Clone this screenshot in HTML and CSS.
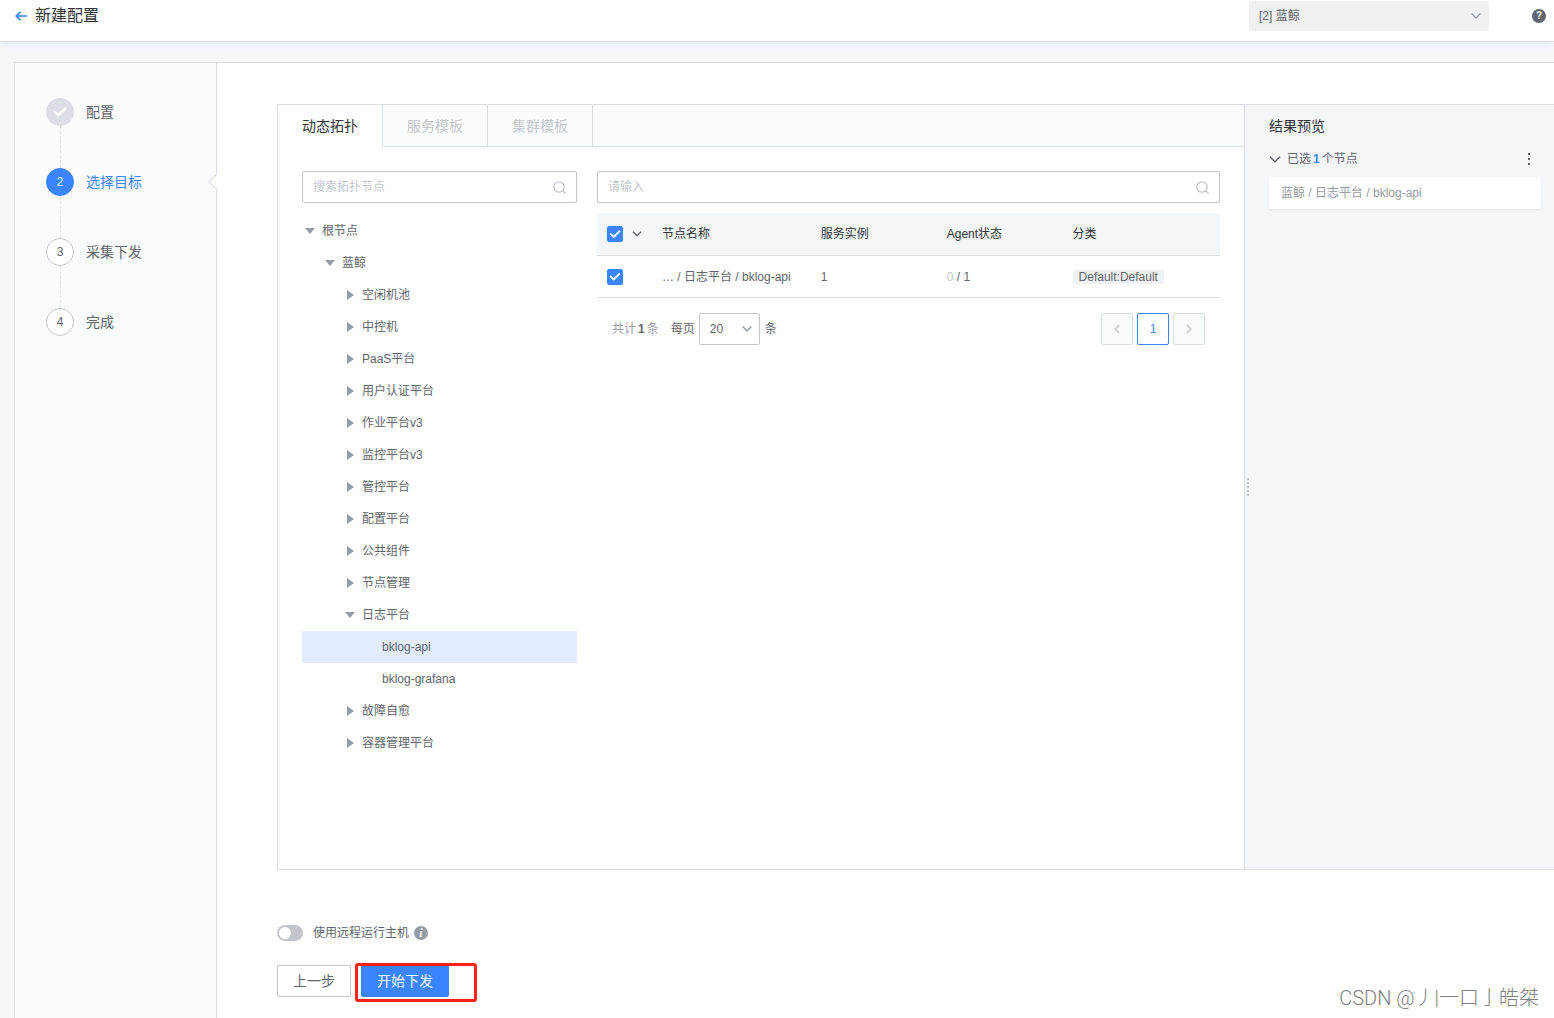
FILE: index.html
```html
<!DOCTYPE html>
<html lang="zh-CN">
<head>
<meta charset="utf-8">
<meta name="viewport" content="width=device-width, initial-scale=1">
<title>新建配置</title>
<link rel="stylesheet" href="styles.css">
</head>
<body>
<header class="topbar">
  <a class="back" href="#" aria-label="返回">
    <svg width="14" height="12" viewBox="0 0 14 12"><path d="M6.5 1.8 2.2 6 6.5 10.2M2.2 6H13" fill="none" stroke="currentColor" stroke-width="1.7"/></svg>
  </a>
  <h1 class="page-title">新建配置</h1>
  <div class="select biz-select">
    <select aria-label="业务"><option>[2] 蓝鲸</option></select>
    <svg class="chevron" width="10" height="6" viewBox="0 0 10 6"><path d="M.6.6 5 5 9.4.6" fill="none" stroke="currentColor" stroke-width="1.4"/></svg>
  </div>
  <button class="help" type="button" aria-label="帮助">?</button>
</header>

<div class="workspace">
  <nav class="sidebar" aria-label="步骤">
    <ol class="steps">
      <li class="step done">
        <span class="step-mark"><svg width="14" height="10" viewBox="0 0 14 10"><path d="M1 4.2 5.2 8.2 13 1" fill="none" stroke="currentColor" stroke-width="2.4"/></svg></span>
        <span>配置</span>
      </li>
      <li class="step current" aria-current="step"><span class="step-mark">2</span><span>选择目标</span></li>
      <li class="step"><span class="step-mark">3</span><span>采集下发</span></li>
      <li class="step"><span class="step-mark">4</span><span>完成</span></li>
    </ol>
  </nav>

  <main class="content">
    <section class="selector">
      <div class="picker">
        <div class="tabs" role="tablist">
          <button class="tab active" type="button" role="tab" aria-selected="true">动态拓扑</button>
          <button class="tab" type="button" role="tab" aria-selected="false" disabled>服务模板</button>
          <button class="tab" type="button" role="tab" aria-selected="false" disabled>集群模板</button>
        </div>
        <div class="picker-body">
          <div class="topology">
            <label class="search">
              <input type="text" placeholder="搜索拓扑节点" aria-label="搜索拓扑节点">
              <svg width="13" height="13" viewBox="0 0 13 13"><circle cx="6" cy="6" r="5.2"/><path d="m9.6 9.6 3 3"/></svg>
            </label>
            <ul class="tree">
              <li><button type="button" class="node level-0 open">根节点</button></li>
              <li><button type="button" class="node level-1 open">蓝鲸</button></li>
              <li><button type="button" class="node level-2">空闲机池</button></li>
              <li><button type="button" class="node level-2">中控机</button></li>
              <li><button type="button" class="node level-2">PaaS平台</button></li>
              <li><button type="button" class="node level-2">用户认证平台</button></li>
              <li><button type="button" class="node level-2">作业平台v3</button></li>
              <li><button type="button" class="node level-2">监控平台v3</button></li>
              <li><button type="button" class="node level-2">管控平台</button></li>
              <li><button type="button" class="node level-2">配置平台</button></li>
              <li><button type="button" class="node level-2">公共组件</button></li>
              <li><button type="button" class="node level-2">节点管理</button></li>
              <li><button type="button" class="node level-2 open">日志平台</button></li>
              <li><button type="button" class="node level-3 leaf selected">bklog-api</button></li>
              <li><button type="button" class="node level-3 leaf">bklog-grafana</button></li>
              <li><button type="button" class="node level-2">故障自愈</button></li>
              <li><button type="button" class="node level-2">容器管理平台</button></li>
            </ul>
          </div>

          <div class="nodes">
            <label class="search">
              <input type="text" placeholder="请输入" aria-label="请输入">
              <svg width="13" height="13" viewBox="0 0 13 13"><circle cx="6" cy="6" r="5.2"/><path d="m9.6 9.6 3 3"/></svg>
            </label>
            <table class="node-table">
              <thead>
                <tr>
                  <th class="col-check"><span class="check-cell"><input type="checkbox" class="check" checked aria-label="全选"><svg class="chevron" width="10" height="6" viewBox="0 0 10 6"><path d="M1 .8 5 4.8 9 .8" fill="none" stroke="currentColor" stroke-width="1.4"/></svg></span></th>
                  <th class="col-name">节点名称</th>
                  <th class="col-count">服务实例</th>
                  <th class="col-agent">Agent状态</th>
                  <th>分类</th>
                </tr>
              </thead>
              <tbody>
                <tr>
                  <td class="col-check"><span class="check-cell"><input type="checkbox" class="check" checked aria-label="bklog-api"></span></td>
                  <td>… / 日志平台 / bklog-api</td>
                  <td>1</td>
                  <td><span class="zero">0</span> / 1</td>
                  <td><span class="tag">Default:Default</span></td>
                </tr>
              </tbody>
            </table>
            <div class="pagination">
              <span class="total">共计<b>1</b>条</span>
              <label for="page-size">每页</label>
              <div class="select size-select">
                <select id="page-size"><option>20</option></select>
                <svg class="chevron" width="10" height="6" viewBox="0 0 10 6"><path d="M.6.6 5 5 9.4.6" fill="none" stroke="currentColor" stroke-width="1.4"/></svg>
              </div>
              <span>条</span>
              <div class="pages">
                <button type="button" class="page" disabled aria-label="上一页"><svg width="6" height="10" viewBox="0 0 6 10"><path d="M5.2 1 1.2 5l4 4" fill="none" stroke="currentColor" stroke-width="1.6"/></svg></button>
                <button type="button" class="page active">1</button>
                <button type="button" class="page" disabled aria-label="下一页"><svg width="6" height="10" viewBox="0 0 6 10"><path d="m.8 1 4 4-4 4" fill="none" stroke="currentColor" stroke-width="1.6"/></svg></button>
              </div>
            </div>
          </div>
        </div>
      </div>

      <aside class="preview">
        <span class="resizer"></span>
        <h2 class="preview-title">结果预览</h2>
        <div class="preview-group">
          <svg class="chevron" width="12" height="7" viewBox="0 0 12 7"><path d="M1 .8 6 5.8 11 .8" fill="none" stroke="currentColor" stroke-width="1.5"/></svg>
          <span class="picked">已选<b>1</b>个节点</span>
          <button class="more" type="button" aria-label="更多"><svg width="2" height="12" viewBox="0 0 2 12"><path d="M0 0h2v2H0zM0 5h2v2H0zM0 10h2v2H0z" fill="currentColor"/></svg></button>
        </div>
        <div class="preview-item">蓝鲸 / 日志平台 / bklog-api</div>
      </aside>
    </section>

    <div class="remote">
      <input id="remote-host" class="switch" type="checkbox" role="switch">
      <label for="remote-host">使用远程运行主机</label>
      <span class="info">i</span>
    </div>

    <div class="actions">
      <button class="btn" type="button">上一步</button>
      <div class="submit">
        <button class="btn primary" type="button">开始下发</button>
        <span class="highlight"></span>
      </div>
    </div>
  </main>
</div>
<div class="watermark">CSDN @丿|一口亅皓桀</div>
</body>
</html>
```

FILE: styles.css
```css
:root {
  --blue: #3a84ff;
  --text: #63656e;
  --dark: #313238;
  --muted: #979ba5;
  --faint: #c4c6cc;
  --line: #dcdee5;
  --panel: #f4f6fa;
}

* {
  box-sizing: border-box;
}

body {
  position: relative;
  display: flex;
  flex-direction: column;
  min-height: 100vh;
  margin: 0;
  background: #f5f7fb;
  color: var(--text);
  font: 12px/20px "Liberation Sans", "Noto Sans CJK SC", sans-serif;
}

button,
input,
select {
  margin: 0;
  color: inherit;
  font: inherit;
}

button {
  padding: 0;
  border: 0;
  background: none;
}

ul,
ol {
  margin: 0;
  padding: 0;
  list-style: none;
}

svg {
  display: block;
  flex: none;
}

/* Top bar */
.topbar {
  display: flex;
  align-items: center;
  padding: 1px 8px 10px 14px;
  border-bottom: 1px solid var(--line);
  background: #fff;
  box-shadow: 0 3px 6px #e6ebf5;
}

.back {
  color: var(--blue);
}

.page-title {
  margin: 0 auto 0 7px;
  color: var(--dark);
  font-size: 16px;
  font-weight: 400;
  line-height: 24px;
}

.select {
  display: grid;
  align-items: center;
}

.select select {
  grid-area: 1 / 1;
  width: 100%;
  border: 0;
  border-radius: 2px;
  outline: 0;
  appearance: none;
}

.select .chevron {
  grid-area: 1 / 1;
  justify-self: end;
  margin-right: 8px;
  color: var(--muted);
  pointer-events: none;
}

.biz-select {
  width: 240px;
  margin-right: 43px;
}

.biz-select select {
  height: 30px;
  padding: 0 10px;
  background: #f0f1f5;
}

.help,
.info {
  display: grid;
  place-items: center;
  width: 14px;
  height: 14px;
  border-radius: 50%;
  background: var(--text);
  color: #fff;
  font-size: 10px;
  font-weight: 700;
  line-height: 14px;
}

/* Frame */
.workspace {
  display: flex;
  flex: 1;
  margin: 20px 0 0 14px;
  border: solid var(--line);
  border-width: 1px 0 0 1px;
}

.sidebar {
  flex: none;
  width: 202px;
  padding: 35px 0 0 31px;
  border-right: 1px solid var(--line);
  background: #fafbfd;
}

.step {
  position: relative;
  display: flex;
  align-items: center;
  gap: 12px;
  height: 28px;
  margin-bottom: 42px;
  font-size: 14px;
}

.step:not(:last-child)::before {
  position: absolute;
  top: 28px;
  left: 14px;
  height: 42px;
  border-left: 1px dashed var(--line);
  content: "";
}

.step-mark {
  display: grid;
  place-items: center;
  width: 28px;
  height: 28px;
  border: 1px solid var(--faint);
  border-radius: 50%;
  background: #fff;
  font-size: 12px;
}

.done .step-mark {
  border-color: var(--line);
  background: var(--line);
  color: #fff;
}

.current {
  color: var(--blue);
}

.current .step-mark {
  border-color: var(--blue);
  background: var(--blue);
  color: #fff;
}

.current::after {
  position: absolute;
  top: 8px;
  right: -7px;
  width: 11px;
  height: 11px;
  border: solid var(--line);
  border-width: 0 0 1px 1px;
  background: #fff;
  transform: rotate(45deg);
  content: "";
}

.content {
  flex: 1;
  min-width: 0;
  padding: 41px 0 20px 60px;
  background: #fff;
}

/* Target selector */
.selector {
  display: flex;
  min-height: 766px;
  border: solid var(--line);
  border-width: 1px 0 1px 1px;
}

.picker {
  flex: 1;
  min-width: 0;
}

.tabs {
  display: flex;
  height: 42px;
  border-bottom: 1px solid var(--line);
  background: #fafbfd;
}

.tab {
  width: 105px;
  height: 41px;
  border-right: 1px solid var(--line);
  color: var(--faint);
  font-size: 14px;
}

.tab.active {
  height: 42px;
  background: #fff;
  color: var(--dark);
}

.picker-body {
  display: flex;
  gap: 20px;
  padding: 24px;
}

.topology {
  flex: none;
  width: 275px;
}

.nodes {
  flex: 1;
  min-width: 0;
}

.search {
  display: flex;
  align-items: center;
  height: 32px;
  padding: 0 10px;
  border: 1px solid var(--faint);
  border-radius: 2px;
}

.search input {
  flex: 1;
  min-width: 0;
  padding: 0;
  border: 0;
  outline: 0;
}

.search input::placeholder {
  color: var(--faint);
}

.search svg {
  fill: none;
  stroke: var(--faint);
  stroke-width: 1.3;
}

.tree {
  margin-top: 12px;
}

.node {
  display: flex;
  align-items: center;
  width: 100%;
  height: 32px;
}

.node::before {
  width: 7px;
  height: 10px;
  margin: 0 8px 0 5px;
  background: var(--muted);
  clip-path: polygon(0 0, 100% 50%, 0 100%);
  content: "";
}

.node.open::before {
  width: 10px;
  height: 6px;
  margin: 0 7px 0 3px;
  clip-path: polygon(0 0, 100% 0, 50% 100%);
}

.node.leaf::before {
  visibility: hidden;
}

.node.selected {
  background: #e1ecff;
}

.level-1 {
  padding-left: 20px;
}

.level-2 {
  padding-left: 40px;
}

.level-3 {
  padding-left: 60px;
}

/* Node table */
.node-table {
  width: 100%;
  margin-top: 10px;
  border-collapse: separate;
  border-spacing: 0;
  table-layout: fixed;
}

.node-table th,
.node-table td {
  padding: 0 15px;
  border-bottom: 1px solid var(--line);
  text-align: left;
  white-space: nowrap;
}

.node-table th {
  height: 43px;
  background: var(--panel);
  color: var(--dark);
  font-weight: 400;
}

.node-table td {
  height: 42px;
}

.node-table .col-check {
  width: 50px;
  padding: 0 0 0 10px;
}

.col-name {
  width: 25.5%;
}

.col-count,
.col-agent {
  width: 20.2%;
}

.check-cell {
  display: flex;
  align-items: center;
  gap: 9px;
  color: var(--text);
}

.check {
  width: 16px;
  height: 16px;
  border: 1px solid #979ba5;
  border-radius: 2px;
  appearance: none;
}

.check:checked {
  display: grid;
  place-items: center;
  border-color: var(--blue);
  background: var(--blue);
}

.check:checked::after {
  width: 12px;
  height: 10px;
  background: #fff;
  clip-path: polygon(4% 52%, 15% 38%, 39% 65%, 85% 12%, 97% 25%, 40% 92%);
  content: "";
}

.zero {
  color: var(--faint);
}

.tag {
  display: inline-block;
  padding: 0 6px;
  background: #f0f1f5;
  line-height: 14px;
}

.pagination {
  display: flex;
  align-items: center;
  padding: 15px;
}

.total {
  margin-right: 12px;
  color: var(--muted);
}

.total b {
  margin: 0 2px;
  color: var(--text);
}

.size-select {
  width: 61px;
  margin: 0 5px 0 4px;
}

.size-select select {
  height: 32px;
  padding: 0 10px;
  border: 1px solid var(--faint);
  background: #fff;
}

.pages {
  display: flex;
  gap: 4px;
  margin-left: auto;
}

.page {
  display: grid;
  place-items: center;
  width: 32px;
  height: 32px;
  border: 1px solid var(--line);
  border-radius: 2px;
  background: #fafbfd;
  color: var(--faint);
}

.page.active {
  border-color: var(--blue);
  background: #fff;
  color: var(--blue);
}

/* Result preview */
.preview {
  position: relative;
  flex: none;
  width: 310px;
  padding: 11px 13px 0 24px;
  border-left: 1px solid var(--line);
  background: var(--panel);
}

.resizer {
  position: absolute;
  top: 50%;
  left: 2px;
  width: 2px;
  height: 18px;
  margin-top: -9px;
  background: repeating-linear-gradient(var(--faint) 0 2px, transparent 2px 4px);
}

.preview-title {
  margin: 0 0 12px;
  color: var(--dark);
  font-size: 14px;
  font-weight: 400;
  line-height: 20px;
}

.preview-group {
  display: flex;
  align-items: center;
  gap: 6px;
  height: 22px;
  margin-bottom: 7px;
}

.picked b {
  margin: 0 2px;
  color: var(--blue);
}

.more {
  margin-left: auto;
  padding: 4px 11px;
}

.preview-item {
  padding: 6px 12px;
  border-radius: 2px;
  background: #fff;
  box-shadow: 0 1px 2px #0000000f;
  color: var(--muted);
}

/* Form footer */
.remote {
  display: flex;
  align-items: center;
  margin-top: 53px;
}

.switch {
  display: flex;
  align-items: center;
  width: 26px;
  height: 16px;
  margin-right: 10px;
  padding: 0 2px;
  border-radius: 8px;
  background: var(--faint);
  appearance: none;
}

.switch::before {
  width: 12px;
  height: 12px;
  border-radius: 50%;
  background: #fff;
  content: "";
}

.info {
  margin-left: 5px;
  background: var(--muted);
  font-family: "Liberation Serif", serif;
  font-size: 12px;
  font-style: italic;
}

.actions {
  display: flex;
  gap: 10px;
  margin-top: 22px;
}

.btn {
  height: 32px;
  padding: 0 15px;
  border: 1px solid var(--faint);
  border-radius: 2px;
  background: #fff;
  font-size: 14px;
}

.btn.primary {
  border-color: var(--blue);
  background: var(--blue);
  color: #fff;
}

.submit {
  position: relative;
}

.highlight {
  position: absolute;
  top: -2px;
  left: -6px;
  width: 122px;
  height: 39px;
  border: 3px solid #fe2014;
  border-radius: 3px;
}

.watermark {
  position: absolute;
  right: 15px;
  bottom: 5px;
  color: #808080;
  font: 300 20px/30px Roboto, "Noto Sans CJK SC", sans-serif;
}
```
